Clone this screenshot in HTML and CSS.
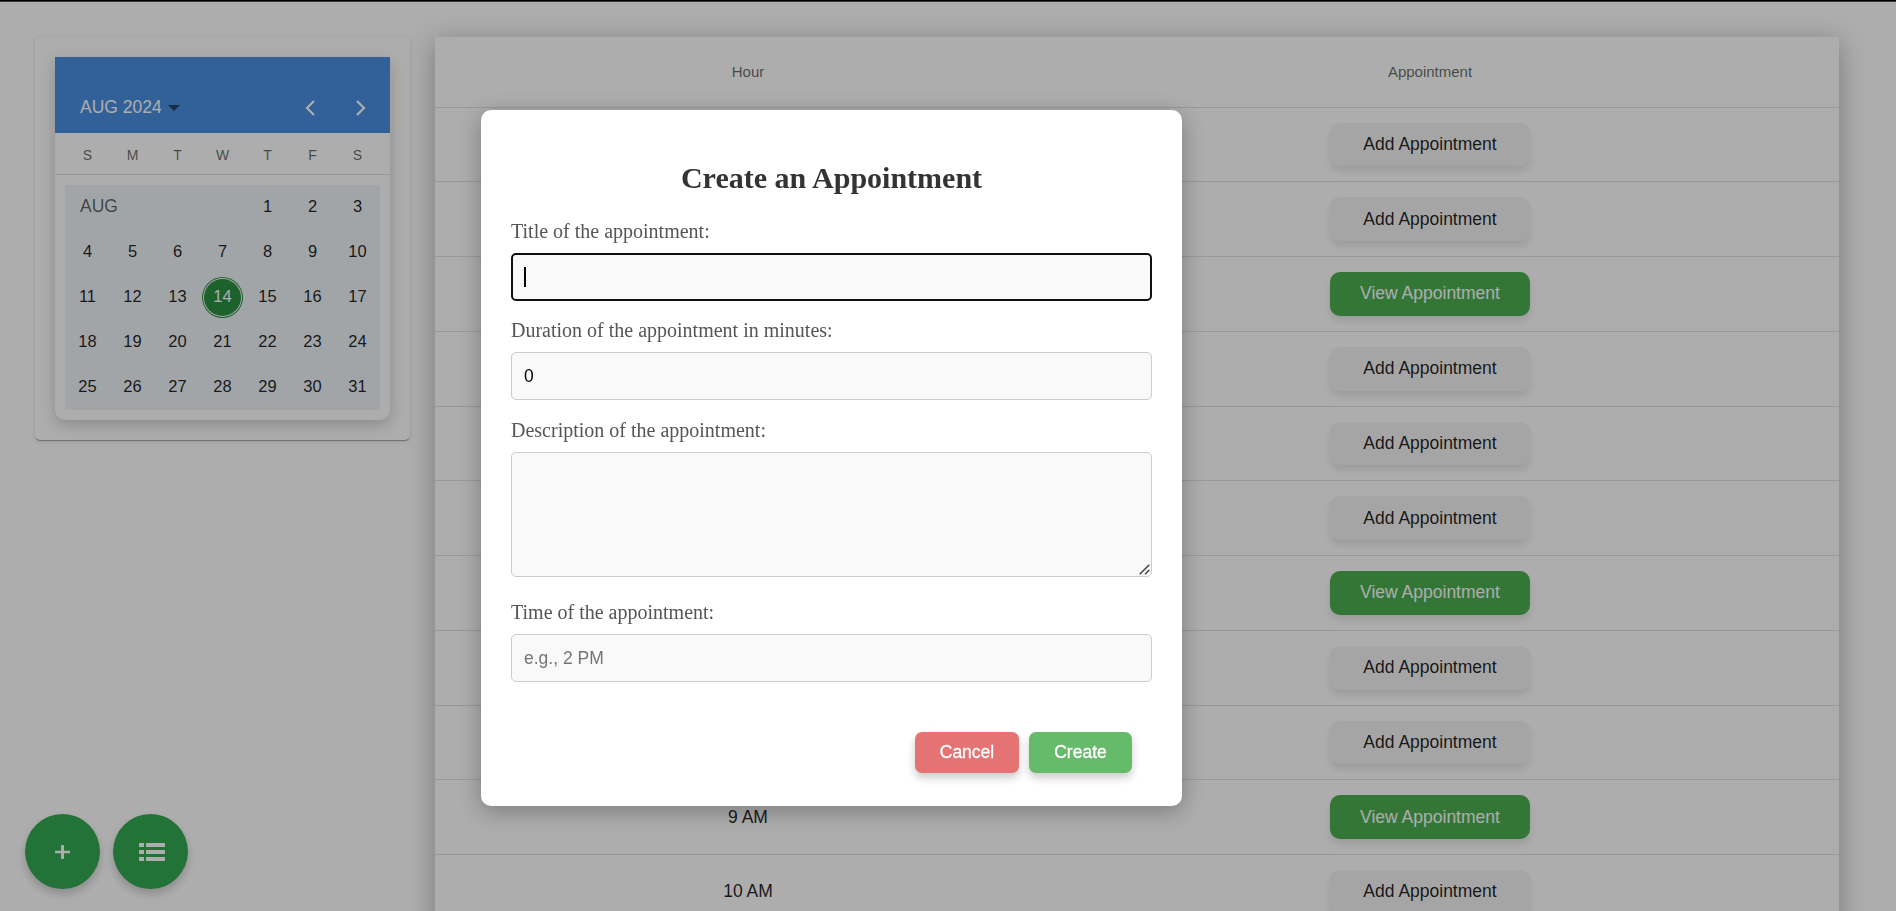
FILE: index.html
```
<!DOCTYPE html>
<html lang="en">
<head>
<meta charset="utf-8">
<title>Appointments</title>
<link rel="stylesheet" href="styles.css">
</head>
<body>
<main class="page">
  <section class="calendar-card">
    <div class="calendar">
      <header class="calendar-header">
        <span>AUG 2024</span>
        <svg class="caret" width="12" height="6" viewBox="0 0 12 6"><path d="M0 0h12L6 6z"/></svg>
        <svg class="chevron" width="10" height="16" viewBox="0 0 10 16"><path d="M9 1L2 8l7 7"/></svg>
        <svg class="chevron next" width="10" height="16" viewBox="0 0 10 16"><path d="M1 1l7 7-7 7"/></svg>
      </header>
      <div class="weekdays"><span>S</span><span>M</span><span>T</span><span>W</span><span>T</span><span>F</span><span>S</span></div>
      <div class="days" id="days"><span class="month">AUG</span></div>
    </div>
  </section>
  <section class="schedule" id="schedule">
    <div class="row head"><span>Hour</span><span>Appointment</span></div>
  </section>
</main>
<nav class="fabs">
  <button class="fab" aria-label="Add"><svg width="15" height="14" viewBox="0 0 15 14"><path d="M0 5.700h6V0h3v5.700h6v2.600H9V14H6V8.300H0z"/></svg></button>
  <button class="fab" aria-label="List"><svg class="list" width="26" height="18" viewBox="0 0 26 18"><path d="M0 0h5v4H0zM7 0h19v4H7zM0 7h5v4H0zM7 7h19v4H7zM0 14h5v4H0zM7 14h19v4H7z"/></svg></button>
</nav>
<div class="backdrop">
  <form class="dialog" autocomplete="off">
    <h2>Create an Appointment</h2>
    <label for="title">Title of the appointment:</label>
    <div class="field focused" id="title"><i class="cursor"></i></div>
    <label for="duration">Duration of the appointment in minutes:</label>
    <input class="field" id="duration" value="0">
    <label for="description">Description of the appointment:</label>
    <div class="area-wrap">
      <textarea class="field area" id="description"></textarea>
      <svg class="grip" width="11" height="11" viewBox="0 0 11 11"><path d="M.7 10.300L10.300.7M6 10.300L10.300 6"/></svg>
    </div>
    <label for="time">Time of the appointment:</label>
    <input class="field" id="time" placeholder="e.g., 2 PM">
    <div class="actions">
      <button type="button" class="action cancel">Cancel</button>
      <button type="button" class="action create">Create</button>
    </div>
  </form>
</div>
<script src="script.js"></script>
</body>
</html>
```
FILE: styles.css
```
* { box-sizing: border-box; }
html { height: 100%; overflow: hidden; }
body {
  margin: 0;
  height: 100%;
  overflow: hidden;
  background: #fff;
  border-top: 1px solid #000;
  font-family: "Liberation Sans", Arial, sans-serif;
  font-size: 17.5px;
  color: rgba(0, 0, 0, .87);
}
button { font: inherit; border: 0; }
.page {
  display: flex;
  align-items: flex-start;
  gap: 25px;
  padding: 35px 0 0 35px;
  border-top: 1px solid #555;
}
.calendar-card {
  width: 375px;
  height: 403px;
  padding: 20px;
  border-radius: 5px;
  background: #fff;
  box-shadow: 0 2px 1px -1px rgba(0,0,0,.2), 0 1px 1px rgba(0,0,0,.14), 0 1px 4px rgba(0,0,0,.12);
}
.calendar {
  height: 363px;
  border-radius: 0 0 10px 10px;
  background: #fff;
  box-shadow: 0 5px 15px rgba(0,0,0,.2);
}
.calendar-header {
  display: flex;
  align-items: center;
  height: 76px;
  padding: 25px 24px 0 25px;
  background: #4a90e2;
  color: #fff;
}
.caret { margin: 1px auto 0 6px; fill: rgba(0,0,0,.54); }
.chevron { fill: none; stroke: #fff; stroke-width: 2.2; }
.chevron.next { margin-left: 41px; }
.weekdays {
  display: grid;
  grid-template-columns: repeat(7, 45px);
  height: 42px;
  padding: 3px 10px 0;
  border-bottom: 1px solid rgba(0,0,0,.12);
  align-items: center;
  text-align: center;
  font-size: 14px;
  color: rgba(0,0,0,.6);
}
.days {
  display: grid;
  grid-template-columns: repeat(7, 45px);
  grid-auto-rows: 45px;
  margin: 10px;
  background: #eff4f8;
  place-items: center;
  font-size: 16.5px;
}
.days > span { padding-bottom: 2px; }
.month {
  grid-column: span 4;
  justify-self: start;
  padding-left: 15px;
  font-size: 17.5px;
  color: rgba(0,0,0,.6);
}
.selected {
  display: grid;
  place-items: center;
  width: 37px;
  height: 37px;
  border-radius: 50%;
  background: #2c8f41;
  color: #fff;
  box-shadow: 0 0 0 1px #f0f4f8, 0 0 0 2px #2c8f41;
}
.schedule {
  width: 1404px;
  height: 900px;
  background: #fff;
  box-shadow: 0 5px 25px rgba(0,0,0,.3);
}
.row {
  display: grid;
  grid-template-columns: 626px 738px 40px;
  height: 74.75px;
  border-bottom: 1px solid rgba(0,0,0,.12);
  place-items: center;
}
.head { height: 70.5px; padding-bottom: 1px; font-size: 15px; color: rgba(0,0,0,.6); }
.book {
  width: 200px;
  height: 43.75px;
  border-radius: 10px;
  background: #f4f4f4;
  color: rgba(0,0,0,.87);
  box-shadow: 0 5px 7px rgba(0,0,0,.1);
}
.book.view { background: #4caf50; color: #fff; }
.fabs { position: fixed; left: 25px; top: 814px; display: flex; gap: 13px; }
.fab {
  display: grid;
  place-items: center;
  width: 75px;
  height: 75px;
  border-radius: 50%;
  background: #34a853;
  box-shadow: 0 5px 10px rgba(0,0,0,.2);
}
.fab svg { fill: #fff; }
.fab .list { margin-left: 3px; }
.backdrop { position: fixed; inset: 0; padding: 110px 0 0 481px; background: rgba(0,0,0,.32); }
.dialog {
  display: flex;
  flex-direction: column;
  width: 701px;
  height: 696px;
  padding: 50px 30px 0;
  border-radius: 10px;
  background: #fff;
  box-shadow: 0 5px 25px rgba(0,0,0,.3);
  font-family: "Liberation Serif", "Times New Roman", serif;
}
.dialog h2 { margin: 0 0 24px; font-size: 30px; line-height: 36px; text-align: center; color: #333; }
.dialog label { height: 33px; font-size: 20px; line-height: 23px; color: #555; }
.field {
  width: 641px;
  height: 48px;
  margin: 0 0 18px;
  padding: 0 12px;
  border: 1px solid #ccc;
  border-radius: 5px;
  outline: 0;
  background: #f9f9f9;
  font: 17.5px "Liberation Sans", Arial, sans-serif;
}
#duration { margin-bottom: 19px; }
.field::placeholder { color: #757575; }
.focused { display: flex; align-items: center; border: 2px solid #101010; padding: 0 11px; }
.cursor { width: 2px; height: 20px; background: #000; }
.area-wrap { position: relative; margin-bottom: 24px; }
.area { display: block; height: 125px; margin: 0; resize: none; }
.grip { position: absolute; right: 2px; bottom: 2px; fill: none; stroke: #444; stroke-width: 1.5; }
.actions { display: flex; justify-content: flex-end; gap: 10px; padding: 32px 20px 0; }
.action {
  width: 103px;
  height: 41px;
  border-radius: 7px;
  color: #fff;
  font: 17.5px "Liberation Sans", Arial, sans-serif;
  -webkit-text-stroke: .3px #fff;
  box-shadow: 0 5px 9px rgba(0,0,0,.2);
}
.cancel { width: 104px; background: #e57373; }
.create { background: #66bb6a; }
```
FILE: script.js
```
const days = document.getElementById('days');
for (let d = 1; d <= 31; d++) {
  const cell = document.createElement('span');
  cell.textContent = d;
  if (d === 14) cell.className = 'selected';
  days.append(cell);
}
// Hours behind the open dialog are left blank.
const firstVisibleHour = 9;
const booked = [2, 6, 9];
const schedule = document.getElementById('schedule');
for (let h = 0; h <= 10; h++) {
  const row = document.createElement('div');
  row.className = 'row';
  const view = booked.includes(h);
  const label = h >= firstVisibleHour ? `${h} AM` : '';
  row.innerHTML = `<span>${label}</span><button class="book${view ? ' view' : ''}">${view ? 'View' : 'Add'} Appointment</button>`;
  schedule.append(row);
}
```
